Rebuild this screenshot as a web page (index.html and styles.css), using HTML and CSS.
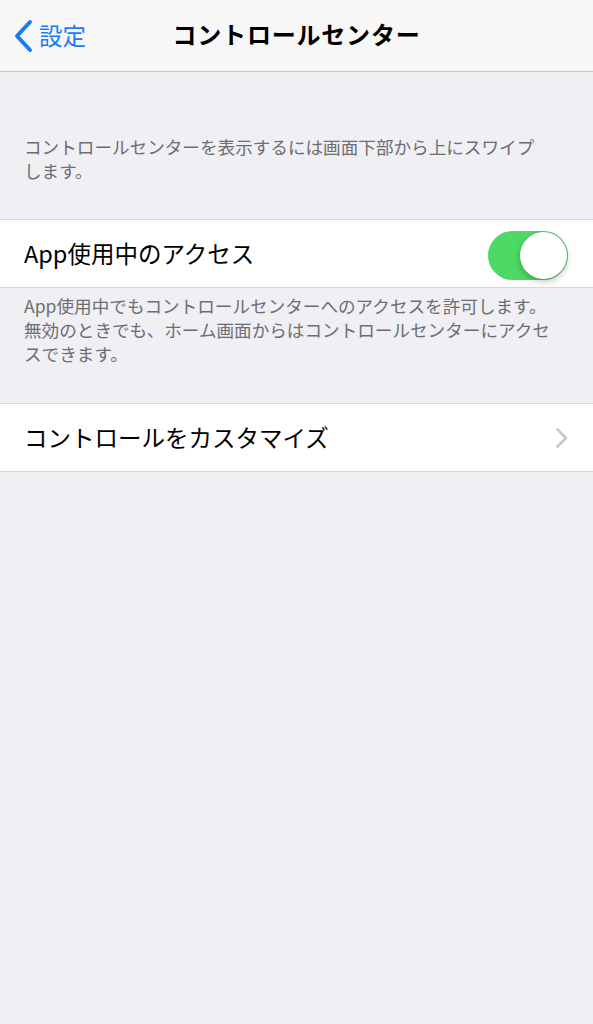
FILE: index.html
```html
<!DOCTYPE html>
<html lang="ja">
<head>
    <meta charset="UTF-8">
    <meta name="viewport" content="width=device-width, initial-scale=1.0">
    <title>コントロールセンター</title>
    <link rel="stylesheet" href="styles.css">
</head>
<body>
    <div class="navbar">
        <a class="back" href="#">
            <svg class="back-icon" width="20" height="34" viewBox="0 0 20 34">
                <path d="M17 3 L4 17 L17 31" fill="none" stroke="#1a7cf5" stroke-width="4" stroke-linecap="round" stroke-linejoin="round"/>
            </svg>
            <span>設定</span>
        </a>
        <div class="title">コントロールセンター</div>
    </div>

    <p class="footer first">コントロールセンターを表示するには画面下部から上にスワイプします。</p>

    <div class="cell">
        <span class="cell-label">App使用中のアクセス</span>
        <div class="switch on"><div class="knob"></div></div>
    </div>
    <p class="footer">App使用中でもコントロールセンターへのアクセスを許可します。無効のときでも、ホーム画面からはコントロールセンターにアクセスできます。</p>

    <div class="cell">
        <span class="cell-label">コントロールをカスタマイズ</span>
        <svg class="chevron" width="14" height="22" viewBox="0 0 14 22">
            <path d="M2.5 2.5 L11 11 L2.5 19.5" fill="none" stroke="#c7c7cc" stroke-width="2.6" stroke-linecap="round" stroke-linejoin="round"/>
        </svg>
    </div>
</body>
</html>
```

FILE: styles.css
```css
body {
    font-family: "Noto Sans CJK JP", "Noto Sans", sans-serif;
    margin: 0;
    padding: 0;
    background-color: #efeff4;
    color: #000;
}
.navbar {
    height: 71px;
    background-color: #f7f7f8;
    border-bottom: 1px solid #c6c6ca;
    display: flex;
    align-items: center;
    justify-content: center;
    position: relative;
}
.back {
    position: absolute;
    left: 13px;
    top: 19px;
    display: flex;
    align-items: center;
    gap: 6px;
    color: #1a7cf5;
    text-decoration: none;
    font-size: 23.5px;
}
.back span {
    margin-top: -3px;
}
.title {
    font-size: 24px;
    font-weight: bold;
    letter-spacing: 0.8px;
    margin-top: -4px;
}
.footer {
    margin: 0;
    padding: 6px 30px 37px 24px;
    font-size: 17.6px;
    line-height: 24px;
    color: #6d6d72;
}
.footer.first {
    padding-top: 63px;
    padding-right: 50px;
    padding-bottom: 36px;
}
.cell {
    height: 67px;
    background-color: #fff;
    border-top: 1px solid #d6d6da;
    border-bottom: 1px solid #d6d6da;
    display: flex;
    align-items: center;
    justify-content: space-between;
    padding: 0 24px;
}
.cell-label {
    font-size: 23.5px;
    margin-top: -2px;
}
.switch {
    width: 80px;
    height: 49px;
    border-radius: 25px;
    background-color: #4cd964;
    position: relative;
    margin-right: 1px;
    margin-top: 4px;
}
.knob {
    position: absolute;
    right: 1px;
    top: 1px;
    width: 47px;
    height: 47px;
    border-radius: 50%;
    background-color: #fff;
    box-shadow: 0 3px 6px rgba(0, 0, 0, 0.22), 0 0 0 1px rgba(0, 0, 0, 0.05);
}
.chevron {
    margin-right: 0;
}
```
